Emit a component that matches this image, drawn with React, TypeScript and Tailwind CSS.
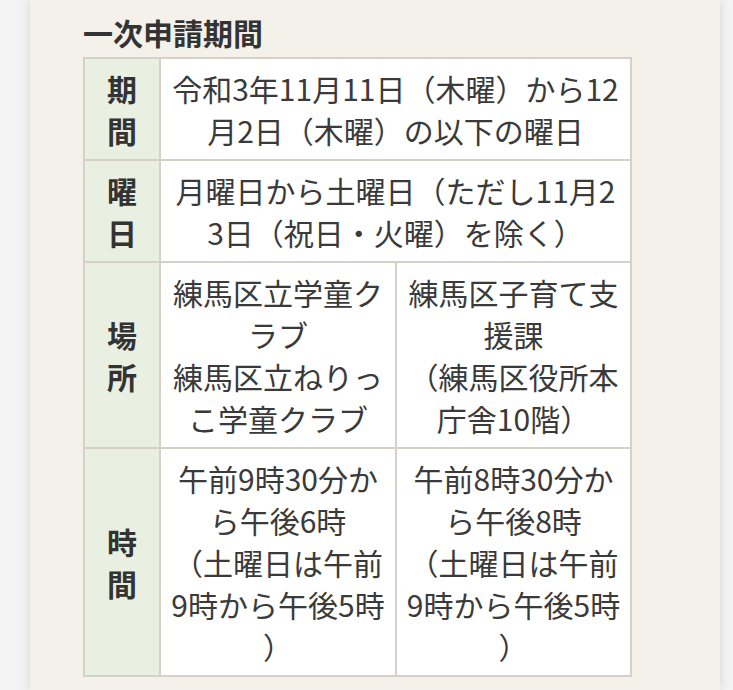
const rows: { head: string[]; cells: string[][] }[] = [
  {
    head: ["期", "間"],
    cells: [["令和3年11月11日（木曜）から12", "月2日（木曜）の以下の曜日"]],
  },
  {
    head: ["曜", "日"],
    cells: [["月曜日から土曜日（ただし11月2", "3日（祝日・火曜）を除く）"]],
  },
  {
    head: ["場", "所"],
    cells: [
      ["練馬区立学童ク", "ラブ", "練馬区立ねりっ", "こ学童クラブ"],
      ["練馬区子育て支", "援課", "（練馬区役所本", "庁舎10階）"],
    ],
  },
  {
    head: ["時", "間"],
    cells: [
      ["午前9時30分か", "ら午後6時", "（土曜日は午前", "9時から午後5時", "）"],
      ["午前8時30分か", "ら午後8時", "（土曜日は午前", "9時から午後5時", "）"],
    ],
  },
];

function Lines({ lines }: { lines: string[] }) {
  return (
    <>
      {lines.map((l, i) => (
        <div key={i} className="whitespace-nowrap">
          {l}
        </div>
      ))}
    </>
  );
}

export default function App() {
  return (
    <div
      className="min-h-[690px] bg-[#f3f3f3] text-[#333]"
      style={{ fontFamily: '"Noto Sans CJK JP", "Noto Sans", sans-serif' }}
    >
      <div className="ml-[30px] min-h-[690px] w-[690px] bg-[#f4f1ea] pl-[53px] pt-[11px] shadow-[0_0_10px_rgba(0,0,0,0.13)]">
        <h2 className="text-[30px] font-bold leading-[42px] text-[#333]">一次申請期間</h2>
        <table className="mt-[4px] w-[547px] table-fixed border-collapse text-[30px] leading-[42px]">
          <colgroup>
            <col className="w-[76px]" />
            <col className="w-[236px]" />
            <col className="w-[235px]" />
          </colgroup>
          <tbody>
            {rows.map((r, i) => (
              <tr key={i}>
                <th className="border-2 border-[#d6d1c8] bg-[#e9f0e2] py-[8px] text-center align-middle font-bold text-[#333]">
                  <Lines lines={r.head} />
                </th>
                {r.cells.length === 1 ? (
                  <td
                    colSpan={2}
                    className="border-2 border-[#d6d1c8] bg-white px-2 py-[8px] text-center align-middle text-[#3a3a3a]"
                  >
                    <Lines lines={r.cells[0]} />
                  </td>
                ) : (
                  r.cells.map((c, j) => (
                    <td
                      key={j}
                      className="border-2 border-[#d6d1c8] bg-white px-1 py-[8px] text-center align-middle text-[#3a3a3a]"
                    >
                      <Lines lines={c} />
                    </td>
                  ))
                )}
              </tr>
            ))}
          </tbody>
        </table>
      </div>
    </div>
  );
}
